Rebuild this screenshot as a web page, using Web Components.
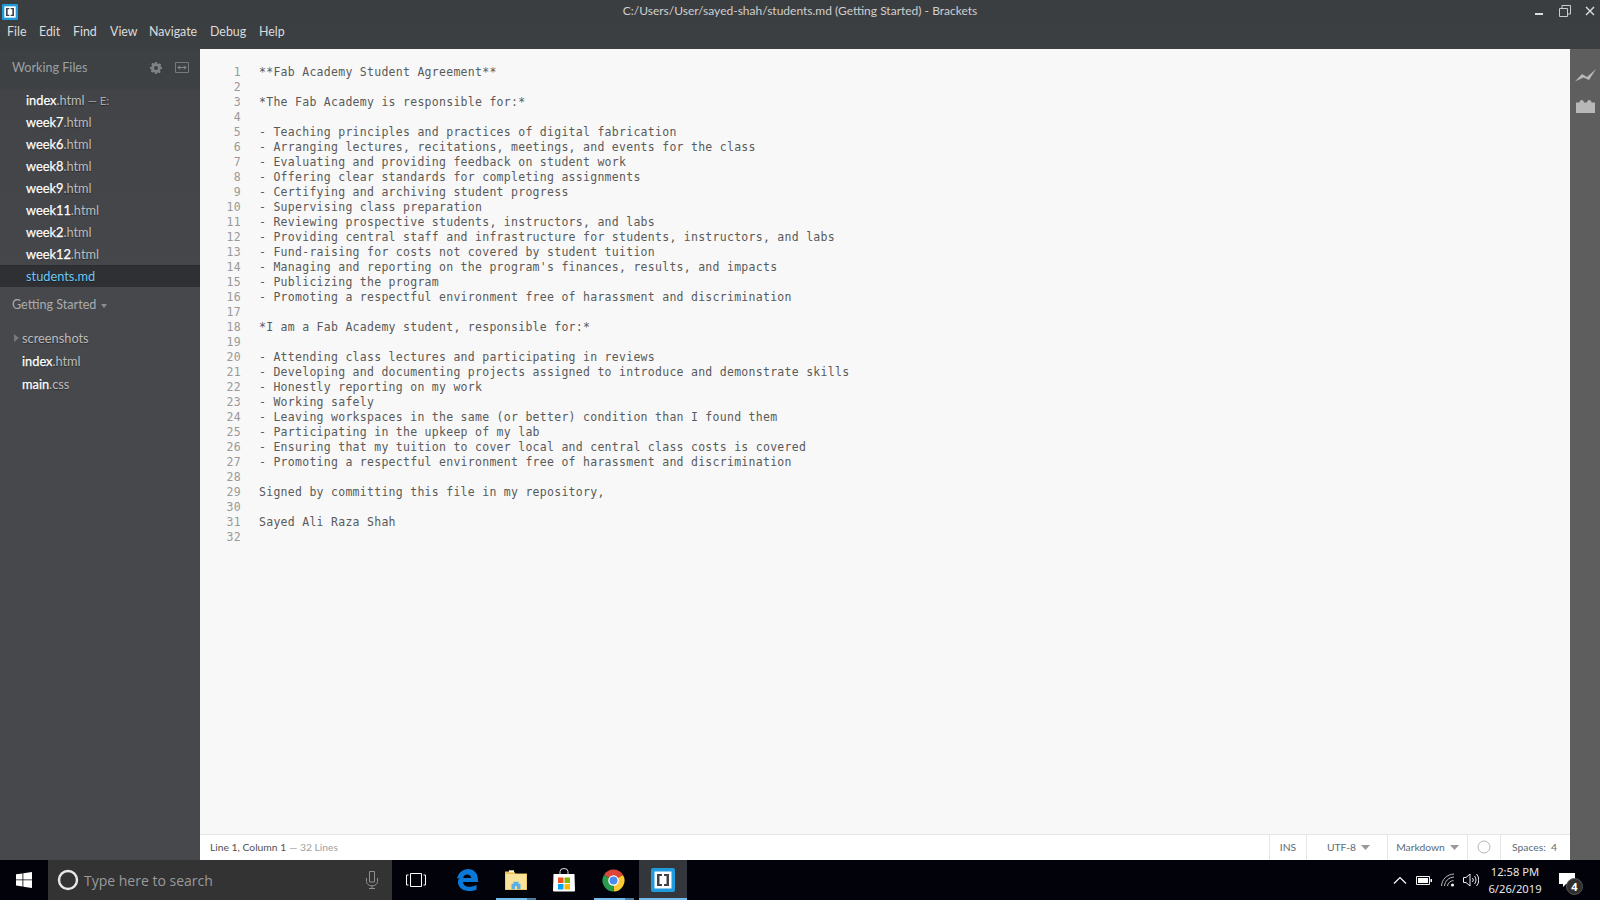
<!DOCTYPE html>
<html><head><meta charset="utf-8"><title>Brackets</title>
<style>
html,body{margin:0;padding:0;width:1600px;height:900px;overflow:hidden;background:#3c3f41;font-family:"Noto Sans","Open Sans",sans-serif}
#app{display:grid;grid-template-rows:49px 811px 40px;grid-template-columns:200px 1fr;width:1600px;height:900px}
app-titlebar{grid-column:1/3}
task-bar{grid-column:1/3}
</style></head><body>
<div id="app">
<app-titlebar></app-titlebar>
<side-bar></side-bar>
<editor-pane></editor-pane>
<task-bar></task-bar>
</div>
<script>
const UI='"Lato","Noto Sans",sans-serif';
const def=(n,html,extra)=>{customElements.define(n,class extends HTMLElement{connectedCallback(){if(this.shadowRoot)return;const r=this.attachShadow({mode:'open'});r.innerHTML=html;if(extra)extra(r,this)}})};
const bracketIcon=(s)=>`<svg width="${s}" height="${s}" viewBox="0 0 24 24"><rect width="24" height="24" rx="2" fill="#1f9bdc"/><rect x="3.500" y="3.500" width="17" height="17" fill="#fff"/><path d="M6 6h5v2H8.500v8H11v2H6zM18 6h-5v2h2.500v8H13v2h5z" fill="#3d4347"/></svg>`;

def('app-titlebar',`<style>
:host{display:grid;grid-template-rows:21px 28px;background:linear-gradient(#3b3e41,#3c3f41);color:#d2d2d2;font:12px ${UI};position:relative}
.top{display:grid;grid-template-columns:1fr auto 1fr;align-items:center}
.logo{display:flex;padding-left:2px;padding-top:3px}
.title{color:#cfcfcf;white-space:nowrap}
.win{display:flex;justify-content:flex-end;align-items:flex-start}
.win span{display:flex;height:16px;justify-content:center;align-items:center}
.menu{display:grid;grid-template-columns:32px 34px 37px 39px 61px 49px 40px;padding-left:7px;align-items:center;font-size:12.400px;color:#dcdcdc;height:21px}
</style>
<div class="top"><div class="logo">${bracketIcon(16)}</div><div class="title">C:/Users/User/sayed-shah/students.md (Getting Started) - Brackets</div>
<div class="win">
<span style="width:22px"><svg width="10" height="10"><rect x="1" y="7" width="8" height="2" fill="#ddd"/></svg></span>
<span style="width:30px"><svg width="12" height="12"><path d="M.5 3.500h8v8h-8zM3 3V.5h8.500V9H9" fill="none" stroke="#ccc"/></svg></span>
<span style="width:20px"><svg width="10" height="10"><path d="M1 1l8 8M9 1l-8 8" stroke="#ddd" stroke-width="1.400"/></svg></span>
</div></div>
<div class="menu"><span>File</span><span>Edit</span><span>Find</span><span>View</span><span>Navigate</span><span>Debug</span><span>Help</span></div>`);

def('file-row',`<style>
:host{display:flex;align-items:center;height:var(--row-h,22px);padding-left:var(--row-pad,26px);font:12.800px ${UI};color:#bcbcbc;white-space:nowrap;text-shadow:0 1px 1px rgba(0,0,0,.4)}
:host([active]){background:#2e3033;color:#6dc8f8;box-shadow:inset 0 1px 0 #2a2c2e}
:host([active]) b{color:#6dc8f8;-webkit-text-stroke:0}
b{font-weight:400;color:#fff;-webkit-text-stroke:.25px #fff}
i{font-style:normal;color:#a9a9a9;font-size:11.500px;margin-left:3px}
</style><slot name="tw"></slot><b></b><span></span><i></i>`,(r,h)=>{
 r.querySelector('b').textContent=h.getAttribute('name');
 r.querySelector('span').textContent=h.getAttribute('ext')||'';
 r.querySelector('i').textContent=h.getAttribute('note')||'';
 if(h.hasAttribute('active'))r.querySelector('span').style.color='#6dc8f8';
});

def('side-bar',`<style>
:host{display:flex;flex-direction:column;background:#47484c;color:#a9a9a9;font:12.600px ${UI};overflow:hidden}
.wfh{display:flex;align-items:center;height:38px;background:#3e4144;padding:0 11px 1px 12px;box-sizing:border-box;box-shadow:0 1px 3px rgba(0,0,0,.1);position:relative;color:#9da0a2}
.wfh span{flex:1}
.work{background:linear-gradient(#424447,#46474a);padding-top:2px;--row-pad:26px;--row-h:22px}
.pj{display:flex;align-items:center;height:35px;padding-left:12px;color:#a9acaf}
.pj svg{margin-left:5px;margin-top:2px}
.tree{--row-pad:22px;--row-h:23px;padding-top:4px}
</style>
<div class="wfh"><span>Working Files</span>
<svg width="14" height="14" viewBox="0 0 14 14"><path fill="#7f8183" fill-rule="evenodd" d="M6 1h2l.3 1.500 1.300.6 1.300-.8 1.400 1.400-.8 1.300.6 1.300L13 6v2l-1.500.3-.6 1.300.8 1.300-1.400 1.400-1.300-.8-1.300.6L8 13H6l-.3-1.500-1.300-.6-1.300.8-1.400-1.400.8-1.300-.6-1.300L1 8V6l1.500-.3.600-1.300-.8-1.300 1.400-1.400 1.300.8 1.300-.6zM7 5a2 2 0 1 0 0 4 2 2 0 0 0 0-4z"/></svg>
<svg width="14" height="11" viewBox="0 0 14 11" style="margin-left:12px"><path d="M.5.5h13v10H.5z" fill="none" stroke="#77797b"/><path d="M3 5.500h8M3 5.500l2-2M3 5.500l2 2M11 5.500l-2-2M11 5.500l-2 2" stroke="#8b8d8f" fill="none"/></svg>
</div>
<div class="work">
<file-row name="index" ext=".html" note="— E:"></file-row>
<file-row name="week7" ext=".html"></file-row>
<file-row name="week6" ext=".html"></file-row>
<file-row name="week8" ext=".html"></file-row>
<file-row name="week9" ext=".html"></file-row>
<file-row name="week11" ext=".html"></file-row>
<file-row name="week2" ext=".html"></file-row>
<file-row name="week12" ext=".html"></file-row>
<file-row name="students" ext=".md" active></file-row>
</div>
<div class="pj"><span>Getting Started</span><svg width="6" height="4"><path d="M0 0h6L3 4z" fill="#8a8c8e"/></svg></div>
<div class="tree">
<file-row name="" ext="screenshots"><svg slot="tw" width="7" height="8" style="margin:0 2px 0 -9px;flex:none"><path d="M1 0l5 4-5 4z" fill="#77797b"/></svg></file-row>
<file-row name="index" ext=".html"></file-row>
<file-row name="main" ext=".css"></file-row>
</div>`);

const code=`**Fab Academy Student Agreement**

*The Fab Academy is responsible for:*

- Teaching principles and practices of digital fabrication
- Arranging lectures, recitations, meetings, and events for the class
- Evaluating and providing feedback on student work
- Offering clear standards for completing assignments
- Certifying and archiving student progress
- Supervising class preparation
- Reviewing prospective students, instructors, and labs
- Providing central staff and infrastructure for students, instructors, and labs
- Fund-raising for costs not covered by student tuition
- Managing and reporting on the program's finances, results, and impacts
- Publicizing the program
- Promoting a respectful environment free of harassment and discrimination

*I am a Fab Academy student, responsible for:*

- Attending class lectures and participating in reviews
- Developing and documenting projects assigned to introduce and demonstrate skills
- Honestly reporting on my work
- Working safely
- Leaving workspaces in the same (or better) condition than I found them
- Participating in the upkeep of my lab
- Ensuring that my tuition to cover local and central class costs is covered
- Promoting a respectful environment free of harassment and discrimination

Signed by committing this file in my repository,

Sayed Ali Raza Shah
`;
def('code-view',`<style>
:host{display:grid;grid-template-columns:41px 1fr;column-gap:18px;padding:16px 0 0 0;font:11.500px/15px "DejaVu Sans Mono",monospace;letter-spacing:.276px;color:#5a5a5a;background:#f8f8f8;white-space:pre;align-content:start;overflow:hidden}
.n{text-align:right;color:#999}
</style>`,(r)=>{code.split('\n').forEach((l,i)=>{
 const n=document.createElement('div');n.className='n';n.textContent=i+1;
 const c=document.createElement('div');c.textContent=l||' ';r.append(n,c);});});

def('status-bar',`<style>
:host{display:flex;height:26px;background:#fff;border-top:1px solid #e6e6e6;box-sizing:border-box;font:10.300px ${UI};color:#535353;align-items:stretch;white-space:nowrap}
.l{flex:1;padding:0 0 1px 10px;display:flex;align-items:center}
.l span{color:#a0a0a0;margin-left:3px}
.c{display:flex;align-items:center;justify-content:center;padding-bottom:1px;border-left:1px solid #e6e6e6;box-sizing:border-box;color:#5a6a78}
.c svg{margin-left:5px}
</style>
<div class="l">Line 1, Column 1<span>— 32 Lines</span></div>
<div class="c" style="width:37px">INS</div>
<div class="c" style="width:81px;padding-left:3px">UTF-8<svg width="9" height="5"><path d="M0 0h9L4.500 5z" fill="#999"/></svg></div>
<div class="c" style="width:80px">Markdown<svg width="9" height="5"><path d="M0 0h9L4.500 5z" fill="#999"/></svg></div>
<div class="c" style="width:33px"><svg style="margin:0" width="14" height="14"><circle cx="7" cy="7" r="6" fill="none" stroke="#b5b5b5"/></svg></div>
<div class="c" style="width:70px;padding-right:2px">Spaces:&nbsp; 4</div>`);

def('side-tools',`<style>
:host{display:flex;flex-direction:column;align-items:center;background:#5e5e5e;padding-top:20px;gap:17px}
</style>
<svg width="21" height="13" viewBox="0 0 21 13"><path d="M0 12.500 L7 5 L12 8 L21 0 L14 11 L8.500 8.500z" fill="#b8b8b8"/></svg>
<svg width="19" height="14" viewBox="0 0 19 14"><path d="M0 3.500h3.500C3.500 0 8 0 8 3.500h3C11 0 15.500 0 15.500 3.500H19V14H0z" fill="#b8b8b8"/></svg>`);

def('editor-pane',`<style>
:host{display:grid;grid-template-columns:1fr 30px;grid-template-rows:1fr 26px;min-height:0}
code-view{grid-column:1;grid-row:1}
status-bar{grid-column:1;grid-row:2}
side-tools{grid-column:2;grid-row:1/3}
</style><code-view></code-view><status-bar></status-bar><side-tools></side-tools>`);

def('task-bar',`<style>
:host{display:flex;background:#01020a;height:40px;color:#fff;font:16px "Open Sans","Noto Sans",sans-serif;position:relative}
.start{width:48px;display:flex;align-items:center;justify-content:center}
.search{width:344px;background:#333;display:flex;align-items:center;box-sizing:border-box;padding-left:9px;color:#9a9a9a;font-size:14px}
.search span{flex:1;margin-left:5px}
.search svg:last-child{margin-right:14px}
.btn{width:48px;display:flex;align-items:center;justify-content:center;position:relative}
.task{margin-right:3px}
.u{position:absolute;left:4px;bottom:0;width:40px;height:2px;background:linear-gradient(90deg,#76b9ed 31px,#4a7ba0 31px)}
.act{background:#33363b}.act .u{left:0;width:48px;background:#76b9ed}
.sp{flex:1}
.tray{display:flex;align-items:center}
.tray>span{display:flex;justify-content:center;align-items:center}
.clock{width:66px;text-align:center;font-size:11.200px;line-height:17px;color:#e6e6e6;font-family:"Noto Sans","Open Sans",sans-serif;white-space:nowrap}
.note{width:47px;position:relative;height:40px}
.badge{position:absolute;left:18px;top:18px;width:17px;height:17px;border-radius:50%;background:#2f2f2f;border:1px solid #555;box-sizing:border-box;font:700 11px/15px "Open Sans",sans-serif;text-align:center}
.edge{width:5px;background:#2b2b2b}
</style>
<div class="start"><svg width="16" height="16" viewBox="0 0 16 16"><path fill="#fff" d="M0 2.300 6.500 1.400V7.500H0zM7.300 1.300 16 0V7.500H7.300zM0 8.300H6.500V14.500L0 13.600zM7.300 8.300H16V16L7.300 14.700z"/></svg></div>
<div class="search"><svg width="22" height="22" viewBox="0 0 22 22"><circle cx="11" cy="11" r="9" fill="none" stroke="#e8e8e8" stroke-width="2.400"/></svg><span>Type here to search</span>
<svg width="12" height="18" viewBox="0 0 12 18"><path d="M3.500.5h5v10.500h-5zM.5 7v3.500a5 4 0 0 0 11 0V7M6 14.500V17.500M3 17.500h6" fill="none" stroke="#8e8e8e"/></svg></div>
<div class="btn task"><svg width="20" height="14" viewBox="0 0 20 14"><path d="M4.500.5h11v13h-11zM2.500 2H.5v10h2M17.500 2h2v10h-2" fill="none" stroke="#fff"/></svg></div>
<div class="btn"><svg width="22" height="22" viewBox="0 0 22 22"><path fill="#0a78d7" d="M1 9.500C2.500 3.500 7 0 12 0c6 0 10 4 10 11.500v1.500H7c.3 5 7.500 6.500 13.500 2.800v5C15 23 7.500 22.500 4 18.500 .5 14 2 10 5 7 3.500 9 3.200 9.500 1 9.500zM7.200 9h8c0-4.500-7.500-5-8 0z"/></svg></div>
<div class="btn" style="margin-left:1px"><svg width="22" height="20" viewBox="0 0 22 20"><path d="M0 1.500h9l1.500 2H22V20H0z" fill="#e8c25e"/><path d="M.7 4h20.600v15.300H.7z" fill="#f9e39a"/><path d="M4 .3h5v2H4z" fill="#fff6d8"/><path d="M6.500 19.300v-5.500h2v-2h5v2h2v5.500h-3.500v-3h-2v3z" fill="#5ab0e6"/></svg><div class="u"></div></div>
<div class="btn"><svg width="24" height="24" viewBox="0 0 24 24"><path d="M8 6V3.500a4 3 0 0 1 8 0V6" fill="none" stroke="#ddd" stroke-width="1"/><path d="M1.500 6h21l.5 16.500a1 1 0 0 1-1 1H2a1 1 0 0 1-1-1z" fill="#fff"/><path fill="#f25022" d="M6 9.500h5.500V15H6z"/><path fill="#7fba00" d="M12.500 9.500H18V15h-5.500z"/><path fill="#00a4ef" d="M6 16h5.500v5.500H6z"/><path fill="#ffb900" d="M12.500 16H18v5.500h-5.500z"/></svg></div>
<div class="btn" style="margin-left:1px"><svg width="23" height="23" viewBox="0 0 24 24"><path d="M12 12 2.040 6.250A11.500 11.500 0 0 1 21.960 6.250z" fill="#dc4639"/><path d="M12 12 21.960 6.250A11.500 11.500 0 0 1 12 23.500z" fill="#fcc934"/><path d="M12 12V23.500A11.500 11.500 0 0 1 2.040 6.250z" fill="#2a9a4b"/><circle cx="12" cy="12" r="5.500" fill="#fff"/><circle cx="12" cy="12" r="4.200" fill="#4b8bf0"/></svg><div class="u" style="left:5px"></div></div>
<div class="btn act" style="margin-left:2px">${bracketIcon(24)}<div class="u"></div></div>
<div class="sp"></div>
<div class="tray">
<span style="width:24px"><svg width="14" height="8" viewBox="0 0 14 8"><path d="M1 7.500 7 1.500l6 6" fill="none" stroke="#fff" stroke-width="1.200"/></svg></span>
<span style="width:24px"><svg width="16" height="9" viewBox="0 0 16 9"><path d="M.5.500h13v8H.5z" fill="none" stroke="#eee"/><path d="M2 2h10v5H2zM14.500 3H16v3h-1.500z" fill="#fff"/></svg></span>
<span style="width:24px"><svg width="14" height="14" viewBox="0 0 14 14"><path d="M.5 13C1 6 6 1.500 13 1M3.500 13c.5-5 4-8.500 9.500-9M6.500 13c.3-3 2.500-5 6-5.500" fill="none" stroke="#bbb"/><circle cx="11.500" cy="12" r="1.600" fill="#eee"/></svg></span>
<span style="width:22px"><svg width="16" height="14" viewBox="0 0 16 14"><path d="M.5 4.500H3L7 1v12L3 9.500H.5zM9.500 5a3 3 0 0 1 0 4M11.500 3a6 6 0 0 1 0 8M13.500 1a9 9 0 0 1 0 12" fill="none" stroke="#eee"/></svg></span>
<div class="clock">12:58 PM<br>6/26/2019</div>
<div class="note"><svg style="position:absolute;left:11px;top:13px" width="16" height="14" viewBox="0 0 16 14"><path d="M0 0h16v11H7l-3 3v-3H0z" fill="#fff"/></svg><div class="badge">4</div></div>
<div class="edge"></div>
</div>`);
</script>
</body></html>
